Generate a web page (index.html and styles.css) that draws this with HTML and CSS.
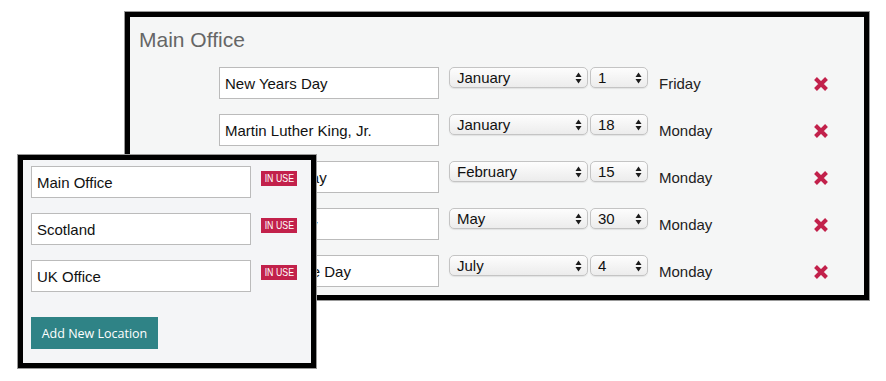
FILE: index.html
```html
<!DOCTYPE html>
<html lang="en">
<head>
    <meta charset="UTF-8">
    <meta name="viewport" content="width=device-width, initial-scale=1.0">
    <title>Holiday Locations</title>
    <link rel="stylesheet" href="styles.css">
</head>
<body>
    <div class="office">
        <h2 class="office-title">Main Office</h2>
        <div class="holidays">
            <div class="holiday">
                <input type="text" class="field" value="New Years Day">
                <div class="pick pick-month">
                    <select><option>January</option></select>
                    <svg class="arrows" width="7" height="14" viewBox="0 0 7 14"><polygon points="0.5,6 3.5,1.5 6.5,6"/><polygon points="0.5,8 3.5,12.5 6.5,8"/></svg>
                </div>
                <div class="pick pick-day">
                    <select><option>1</option></select>
                    <svg class="arrows" width="7" height="14" viewBox="0 0 7 14"><polygon points="0.5,6 3.5,1.5 6.5,6"/><polygon points="0.5,8 3.5,12.5 6.5,8"/></svg>
                </div>
                <span class="weekday">Friday</span>
                <svg class="remove" width="16" height="16" viewBox="0 0 16 16"><path d="M2.5 2.5 L13.5 13.5 M13.5 2.5 L2.5 13.5"/></svg>
            </div>
            <div class="holiday">
                <input type="text" class="field" value="Martin Luther King, Jr.">
                <div class="pick pick-month">
                    <select><option>January</option></select>
                    <svg class="arrows" width="7" height="14" viewBox="0 0 7 14"><polygon points="0.5,6 3.5,1.5 6.5,6"/><polygon points="0.5,8 3.5,12.5 6.5,8"/></svg>
                </div>
                <div class="pick pick-day">
                    <select><option>18</option></select>
                    <svg class="arrows" width="7" height="14" viewBox="0 0 7 14"><polygon points="0.5,6 3.5,1.5 6.5,6"/><polygon points="0.5,8 3.5,12.5 6.5,8"/></svg>
                </div>
                <span class="weekday">Monday</span>
                <svg class="remove" width="16" height="16" viewBox="0 0 16 16"><path d="M2.5 2.5 L13.5 13.5 M13.5 2.5 L2.5 13.5"/></svg>
            </div>
            <div class="holiday">
                <input type="text" class="field" value="Presidents Day">
                <div class="pick pick-month">
                    <select><option>February</option></select>
                    <svg class="arrows" width="7" height="14" viewBox="0 0 7 14"><polygon points="0.5,6 3.5,1.5 6.5,6"/><polygon points="0.5,8 3.5,12.5 6.5,8"/></svg>
                </div>
                <div class="pick pick-day">
                    <select><option>15</option></select>
                    <svg class="arrows" width="7" height="14" viewBox="0 0 7 14"><polygon points="0.5,6 3.5,1.5 6.5,6"/><polygon points="0.5,8 3.5,12.5 6.5,8"/></svg>
                </div>
                <span class="weekday">Monday</span>
                <svg class="remove" width="16" height="16" viewBox="0 0 16 16"><path d="M2.5 2.5 L13.5 13.5 M13.5 2.5 L2.5 13.5"/></svg>
            </div>
            <div class="holiday">
                <input type="text" class="field" value="Memorial Day">
                <div class="pick pick-month">
                    <select><option>May</option></select>
                    <svg class="arrows" width="7" height="14" viewBox="0 0 7 14"><polygon points="0.5,6 3.5,1.5 6.5,6"/><polygon points="0.5,8 3.5,12.5 6.5,8"/></svg>
                </div>
                <div class="pick pick-day">
                    <select><option>30</option></select>
                    <svg class="arrows" width="7" height="14" viewBox="0 0 7 14"><polygon points="0.5,6 3.5,1.5 6.5,6"/><polygon points="0.5,8 3.5,12.5 6.5,8"/></svg>
                </div>
                <span class="weekday">Monday</span>
                <svg class="remove" width="16" height="16" viewBox="0 0 16 16"><path d="M2.5 2.5 L13.5 13.5 M13.5 2.5 L2.5 13.5"/></svg>
            </div>
            <div class="holiday">
                <input type="text" class="field" value="Independence Day">
                <div class="pick pick-month">
                    <select><option>July</option></select>
                    <svg class="arrows" width="7" height="14" viewBox="0 0 7 14"><polygon points="0.5,6 3.5,1.5 6.5,6"/><polygon points="0.5,8 3.5,12.5 6.5,8"/></svg>
                </div>
                <div class="pick pick-day">
                    <select><option>4</option></select>
                    <svg class="arrows" width="7" height="14" viewBox="0 0 7 14"><polygon points="0.5,6 3.5,1.5 6.5,6"/><polygon points="0.5,8 3.5,12.5 6.5,8"/></svg>
                </div>
                <span class="weekday">Monday</span>
                <svg class="remove" width="16" height="16" viewBox="0 0 16 16"><path d="M2.5 2.5 L13.5 13.5 M13.5 2.5 L2.5 13.5"/></svg>
            </div>
        </div>
    </div>

    <div class="locations">
        <div class="location">
            <input type="text" class="field" value="Main Office">
            <span class="badge"><span class="badge-text">IN USE</span></span>
        </div>
        <div class="location">
            <input type="text" class="field" value="Scotland">
            <span class="badge"><span class="badge-text">IN USE</span></span>
        </div>
        <div class="location">
            <input type="text" class="field" value="UK Office">
            <span class="badge"><span class="badge-text">IN USE</span></span>
        </div>
        <button class="add-btn">Add New Location</button>
    </div>
</body>
</html>
```

FILE: styles.css
```css
:root {
    --panel: #f5f6f6;
    --panel-alt: #f4f5f7;
    --crimson: #c2214b;
    --teal: #2f8386;
    --text: #111;
}

* {
    box-sizing: border-box;
    margin: 0;
    padding: 0;
}

body {
    position: relative;
    width: 886px;
    height: 381px;
    overflow: hidden;
    background: #fff;
    font-family: 'Liberation Sans', Arial, sans-serif;
    color: var(--text);
}

.office {
    width: 744px;
    height: 288px;
    margin: 12px 0 0 125px;
    border: 5px solid #000;
    box-shadow: 0 0 0 1px #999;
    background: var(--panel);
    padding: 11px 0 0 9px;
}

.office-title {
    font-size: 21px;
    line-height: 24px;
    font-weight: normal;
    color: #666;
    margin-bottom: 15px;
}

.holidays {
    display: flex;
    flex-direction: column;
    gap: 15px;
    padding-left: 80px;
}

.holiday {
    display: flex;
    align-items: flex-start;
    height: 32px;
}

.field {
    width: 220px;
    height: 32px;
    border: 1px solid #bbb;
    background: #fff;
    padding: 0 5px;
    font-family: 'Liberation Sans', Arial, sans-serif;
    font-size: 15px;
    color: var(--text);
    outline: none;
}

.pick {
    position: relative;
    height: 21px;
}

.pick-month {
    width: 139px;
    margin-left: 10px;
}

.pick-day {
    width: 58px;
    margin-left: 2px;
}

.pick select {
    appearance: none;
    -webkit-appearance: none;
    width: 100%;
    height: 21px;
    border: 1px solid #c4c4c4;
    border-radius: 5px;
    background: linear-gradient(#fdfdfd, #ececec);
    box-shadow: 0 1px 1px rgba(0, 0, 0, 0.08);
    padding: 0 0 0 7px;
    font-family: 'Liberation Sans', Arial, sans-serif;
    font-size: 15px;
    line-height: 19px;
    color: var(--text);
    outline: none;
}

.arrows {
    position: absolute;
    right: 6px;
    top: 4px;
    fill: #1c1c1c;
    pointer-events: none;
}

.weekday {
    width: 154px;
    margin-left: 11px;
    font-size: 15px;
    line-height: 34px;
    color: #222;
}

.remove {
    align-self: center;
    margin-top: 1px;
    stroke: var(--crimson);
    stroke-width: 4;
    fill: none;
}

.locations {
    position: absolute;
    left: 18px;
    top: 155px;
    width: 298px;
    height: 213px;
    border: 5px solid #000;
    box-shadow: 0 0 0 1px #999;
    background: var(--panel-alt);
    padding: 6px 0 0 8px;
    display: flex;
    flex-direction: column;
    align-items: flex-start;
    gap: 15px;
}

.location {
    display: flex;
    align-items: flex-start;
    gap: 10px;
}

.badge {
    display: flex;
    justify-content: center;
    margin-top: 5px;
    width: 36px;
    height: 15px;
    background: var(--crimson);
}

.badge-text {
    display: inline-block;
    white-space: nowrap;
    color: #fff;
    font-size: 11px;
    line-height: 15px;
    transform: scaleX(0.8);
}

.add-btn {
    margin-top: 10px;
    width: 127px;
    height: 32px;
    border: none;
    background: var(--teal);
    color: #fff;
    font-family: 'Open Sans', 'Liberation Sans', sans-serif;
    font-size: 12.5px;
    white-space: nowrap;
    text-align: center;
    cursor: pointer;
}
```
